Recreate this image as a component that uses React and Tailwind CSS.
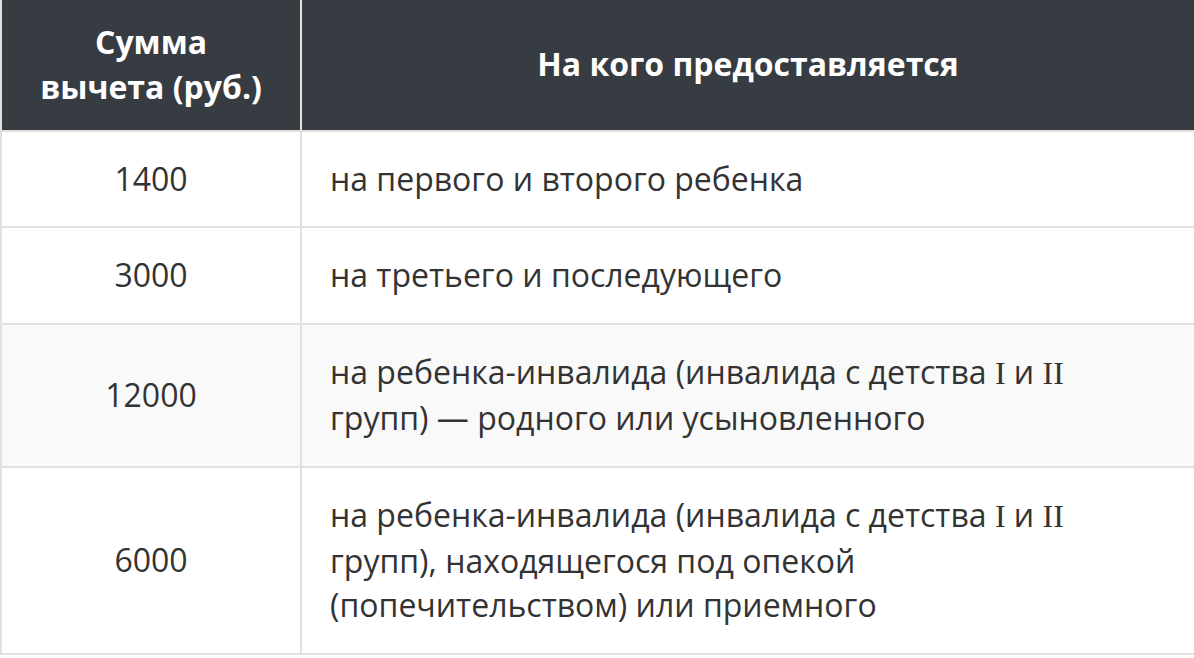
const serif = "font-['Liberation_Serif',serif]";

const rows = [
  { sum: '1400', who: 'на первого и второго ребенка' },
  { sum: '3000', who: 'на третьего и последующего' },
  {
    sum: '12000',
    who: (
      <>
        на ребенка-инвалида (инвалида с детства <span className={serif}>I</span> и{' '}
        <span className={serif}>II</span> групп) — родного или усыновленного
      </>
    ),
    shade: true,
  },
  {
    sum: '6000',
    who: (
      <>
        на ребенка-инвалида (инвалида с детства <span className={serif}>I</span> и{' '}
        <span className={serif}>II</span> групп), находящегося под опекой (попечительством) или приемного
      </>
    ),
  },
];

export default function App() {
  return (
    <div className="w-[1194px] h-[658px] bg-white overflow-hidden font-['Open_Sans',sans-serif] text-[32px] leading-[44.8px] text-[#333333]">
      <table className="w-full border-collapse">
        <thead>
          <tr className="bg-[#373c43] text-white font-bold">
            <th className="w-[300px] border-2 border-t-0 border-[#e1e1e1] px-[30px] py-[20px] text-center">
              Сумма вычета (руб.)
            </th>
            <th className="border-2 border-t-0 border-r-0 border-[#e1e1e1] px-[30px] py-[20px] text-center">
              На кого предоставляется
            </th>
          </tr>
        </thead>
        <tbody>
          {rows.map((r) => (
            <tr key={r.sum} className={r.shade ? 'bg-[#f9f9f9]' : 'bg-white'}>
              <td className="border-2 border-[#e1e1e1] px-[30px] py-[25px] text-center align-middle">{r.sum}</td>
              <td className="border-2 border-r-0 border-[#e1e1e1] pl-[28px] pr-[44px] py-[25px] text-left align-middle">{r.who}</td>
            </tr>
          ))}
        </tbody>
      </table>
    </div>
  );
}
